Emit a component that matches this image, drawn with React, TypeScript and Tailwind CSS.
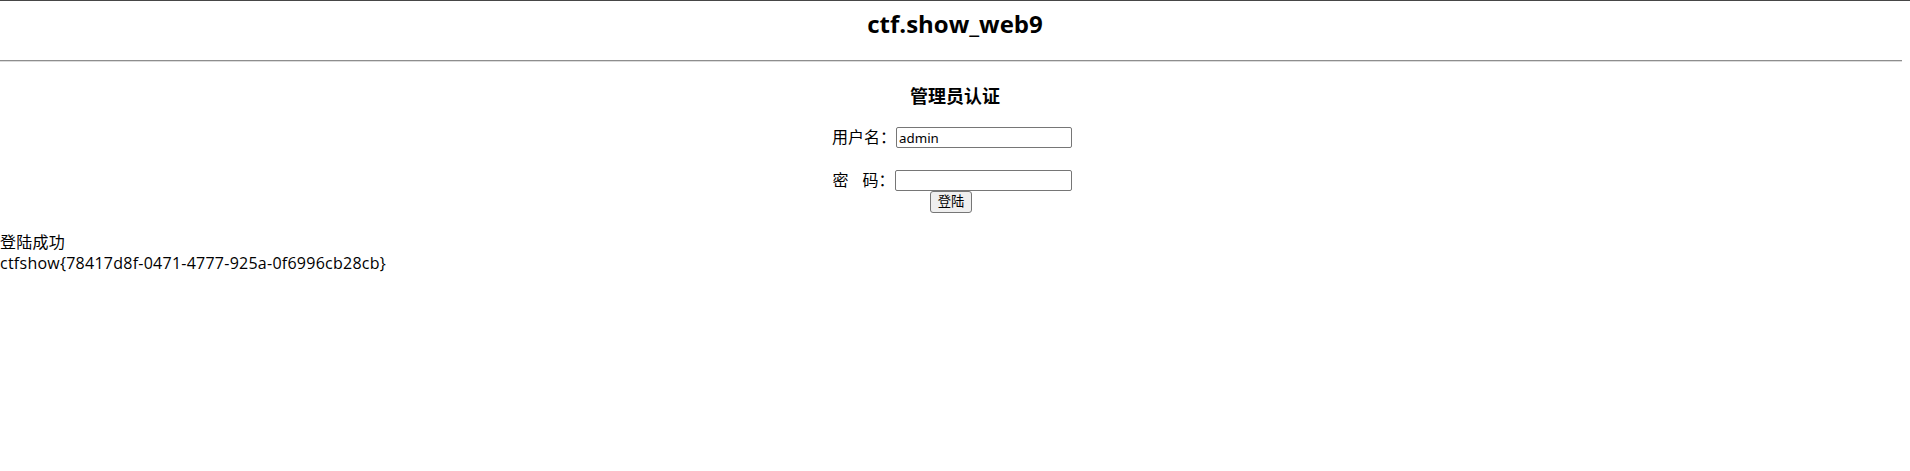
export default function App() {
  const sans = "font-['Open_Sans','Noto_Sans_CJK_SC',sans-serif]";
  return (
    <div className={`min-h-[471px] w-full border-t border-[#464646] bg-white text-black ${sans}`}>
      <h1 className="pt-[7px] text-center text-[24px] font-bold leading-[32px]">ctf.show_web9</h1>
      <hr className="mr-[8px] mt-[20px] border-t border-b border-t-[#8e8e8e] border-b-[#dcdcdc]" />
      <h3 className="mt-[22px] text-center text-[18px] font-bold leading-[24px]">管理员认证</h3>
      <div className="mt-[19px] flex flex-col items-center">
        <div className="mr-[6px] flex h-[21px] items-center text-[16px] leading-[21px]">
          <span className="w-[64px]">用户名：</span>
          <input
            type="text"
            defaultValue="admin"
            className="h-[21px] w-[176px] rounded-[2px] border border-[#767676] px-[2px] text-[13.33px] font-['Noto_Sans',sans-serif] leading-none"
          />
        </div>
        <div className="mr-[6px] mt-[22px] flex h-[21px] items-center text-[16px] leading-[21px]">
          <span className="flex w-[62px]">
            <span>密</span>
            <span className="ml-[14px]">码：</span>
          </span>
          <input
            type="password"
            className="h-[21px] w-[177px] rounded-[2px] border border-[#767676] px-[2px] text-[13.33px]"
          />
        </div>
        <button
          type="button"
          className="mr-[8px] h-[22px] w-[42px] rounded-[3px] border border-[#767676] bg-[#efefef] text-[13.33px] leading-none"
        >
          登陆
        </button>
      </div>
      <div className="mt-[19px] text-[16px] leading-[21px] tracking-[0.25px]">
        <div>登陆成功</div>
        <div>ctfshow{"{"}78417d8f-0471-4777-925a-0f6996cb28cb{"}"}</div>
      </div>
    </div>
  );
}
